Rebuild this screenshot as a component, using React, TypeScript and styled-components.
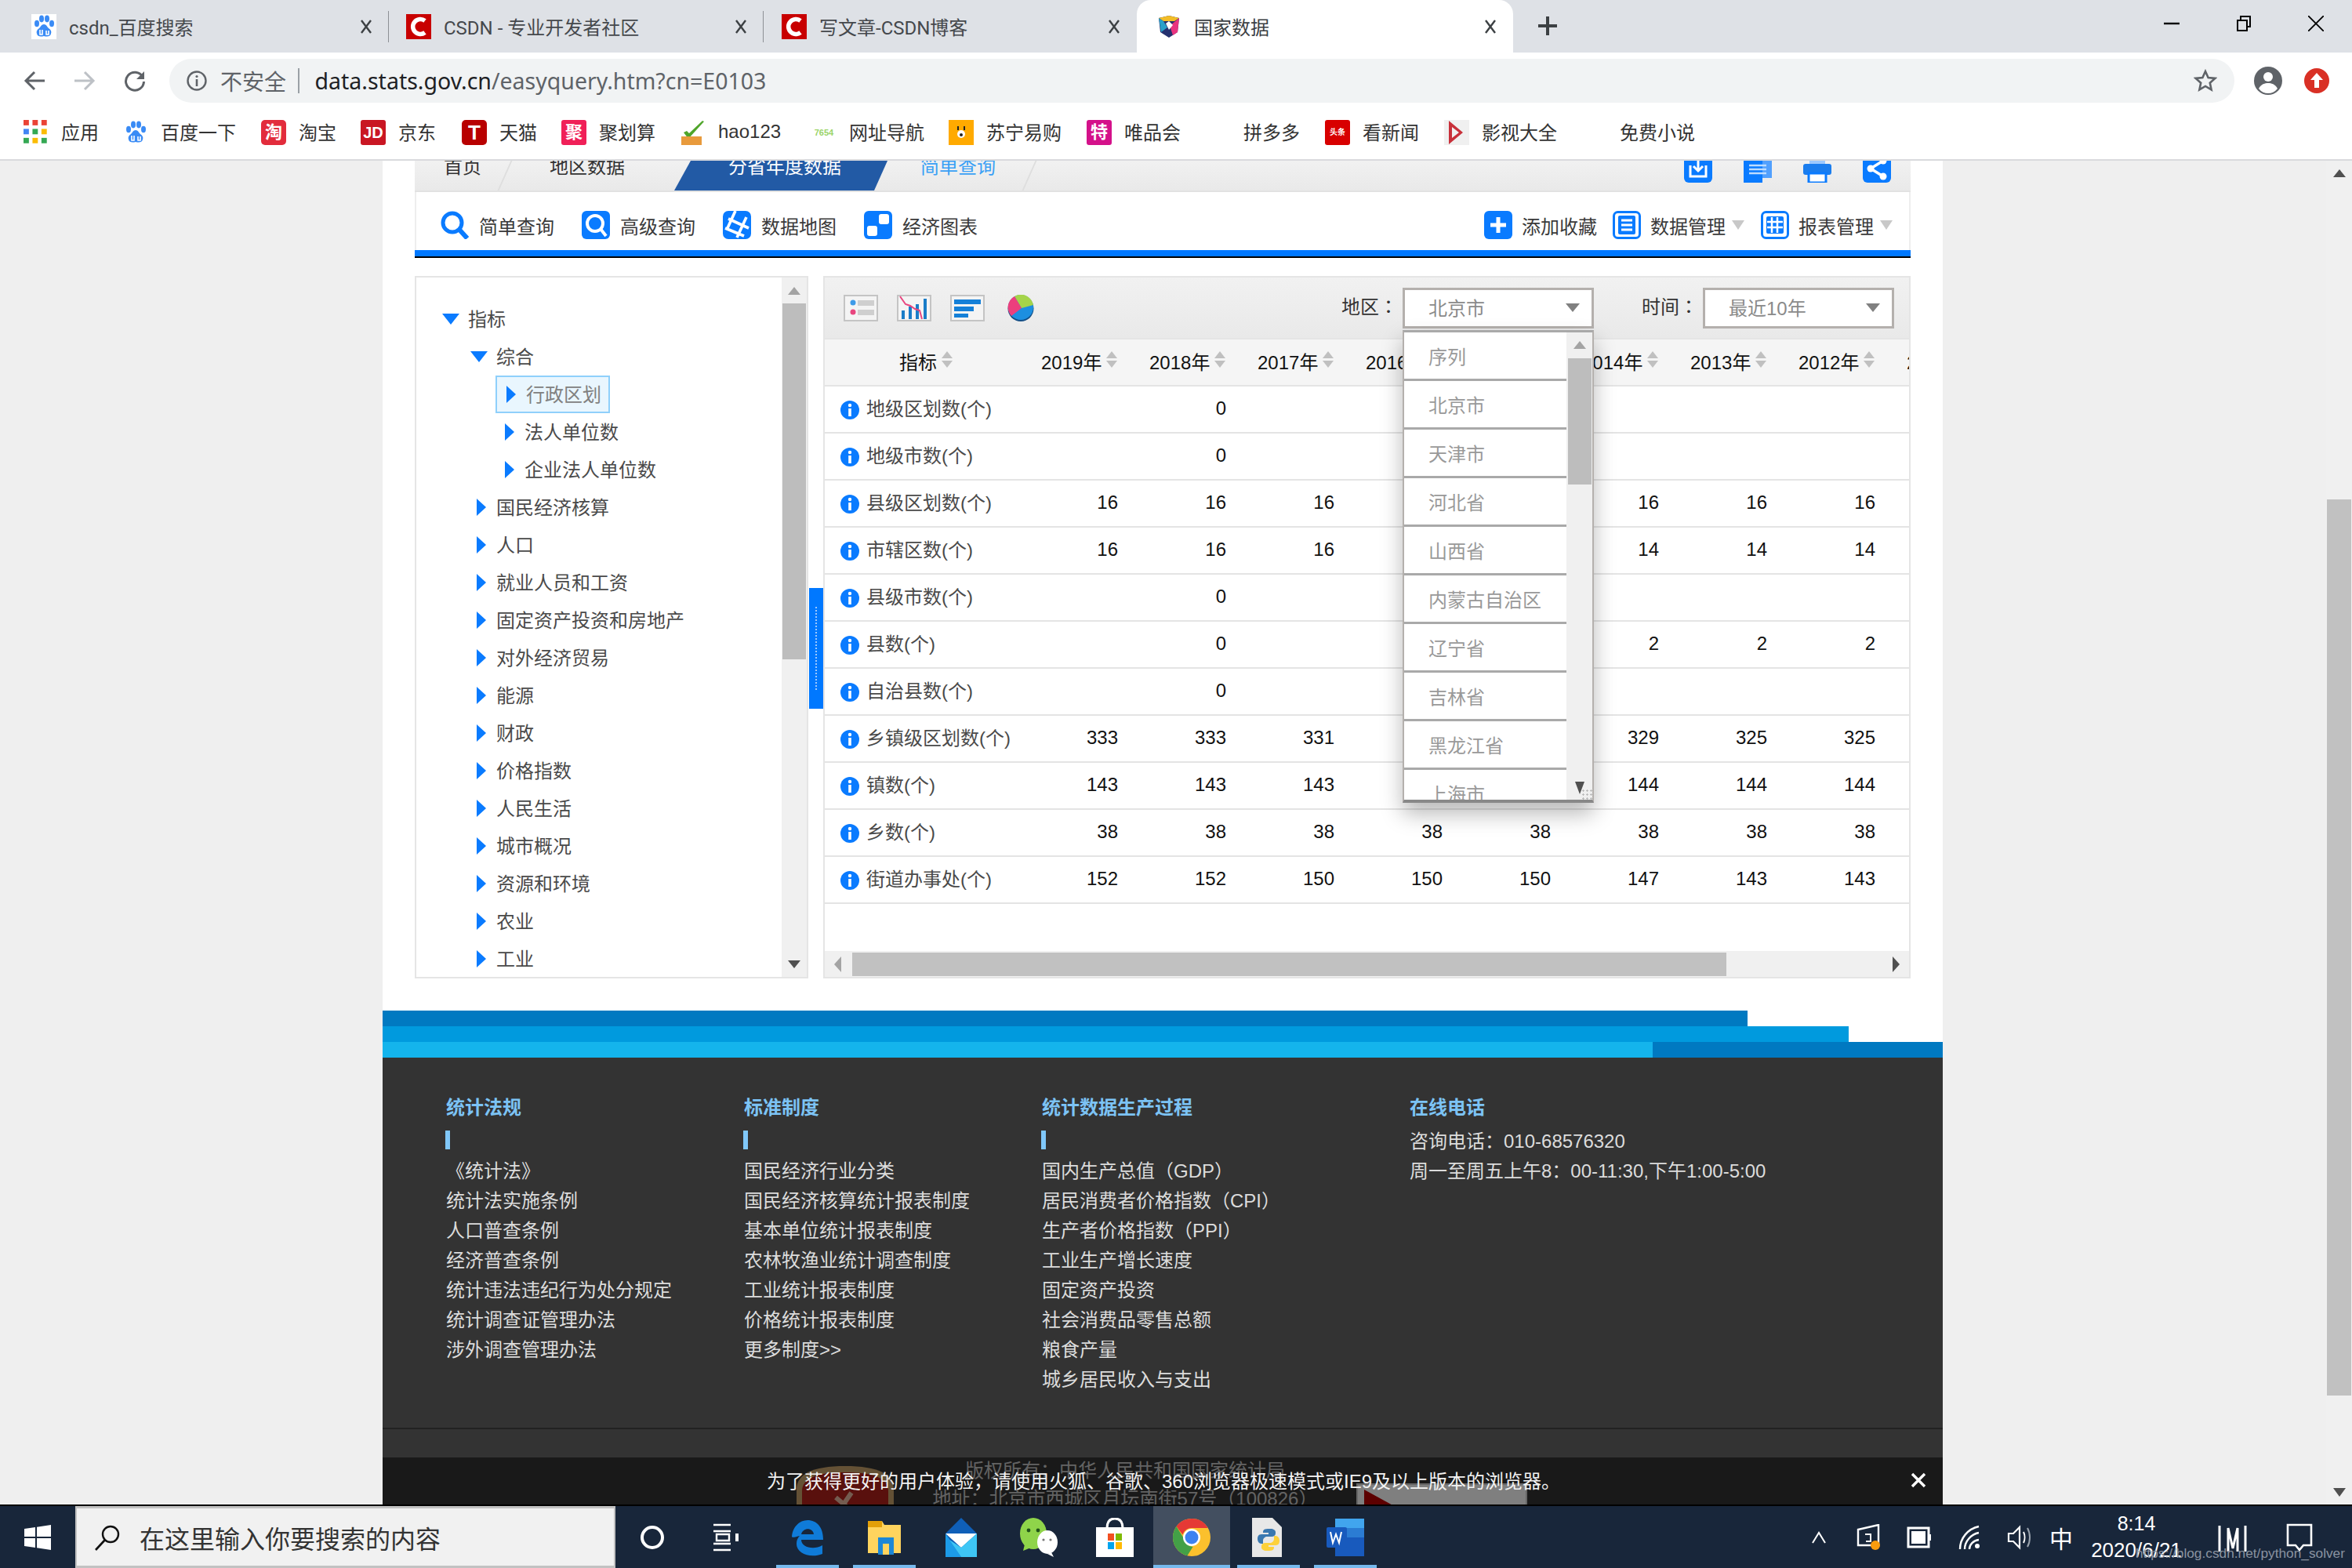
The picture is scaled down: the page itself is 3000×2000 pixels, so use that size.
import React from "react";
import styled, { createGlobalStyle } from "styled-components";

const CJK = '"Liberation Sans","Noto Sans CJK SC",sans-serif';
const UI = '"Roboto","Noto Sans CJK SC",sans-serif';
const URLFONT = '"Noto Sans","Noto Sans CJK SC",sans-serif';

const Global = createGlobalStyle`
  html, body { margin: 0; padding: 0; background: #fff; }
  * { box-sizing: border-box; }
  body { font-family: ${CJK}; }
`;

const Windowed = styled.div`
  width: 3000px; height: 2000px; display: flex; flex-direction: column; overflow: hidden; position: relative;
`;

/* ------- triangle ------- */
const Tri = styled.span<{ $d: "u" | "d" | "l" | "r"; $w: number; $h: number; $c: string }>`
  display: block; width: 0; height: 0; flex: none; border-style: solid; border-color: transparent;
  ${(p) => p.$d === "u" && `border-width: 0 ${p.$w / 2}px ${p.$h}px; border-bottom-color: ${p.$c};`}
  ${(p) => p.$d === "d" && `border-width: ${p.$h}px ${p.$w / 2}px 0; border-top-color: ${p.$c};`}
  ${(p) => p.$d === "r" && `border-width: ${p.$h / 2}px 0 ${p.$h / 2}px ${p.$w}px; border-left-color: ${p.$c};`}
  ${(p) => p.$d === "l" && `border-width: ${p.$h / 2}px ${p.$w}px ${p.$h / 2}px 0; border-right-color: ${p.$c};`}
`;

/* ------- tab strip ------- */
const TabStrip = styled.div`
  height: 67px; flex: none; background: #dee1e6; display: flex; align-items: stretch; position: relative;
`;
const Tab = styled.div<{ $w: number; $pl: number; $active?: boolean; $sep?: boolean }>`
  width: ${(p) => p.$w}px; flex: none; display: flex; align-items: center; padding: 0 22px 0 ${(p) => p.$pl}px;
  gap: 16px; position: relative; font: 24px ${UI}; color: #45484c;
  ${(p) => p.$active && `background: #fff; border-radius: 18px 18px 0 0; color:#3c4043;`}
  ${(p) => p.$sep && `&::after { content: ""; position: absolute; right: 0; top: 14px; height: 40px; width: 1.5px; background: #8d9095; }`}
`;
const TabTitle = styled.span`flex: 1; white-space: nowrap; overflow: hidden;`;
const TabIcon = styled.svg`width: 32px; height: 32px; flex: none;`;
const CloseGlyph = styled.svg`width: 14px; height: 18px; flex: none;`;
const NewTab = styled.div`
  margin-left: 32px; align-self: center; width: 24px; height: 24px; position: relative; margin-top: -2px;
  &::before { content: ""; position: absolute; left: 10px; top: 0; bottom: 0; width: 4px; background: #3c4043; }
  &::after { content: ""; position: absolute; top: 10px; left: 0; right: 0; height: 4px; background: #3c4043; }
`;
const WinControls = styled.div`
  margin-left: auto; display: flex; align-items: center; padding-right: 36px; gap: 72px; margin-top: -8px;
`;
const WinIcon = styled.svg`width: 20px; height: 20px; flex: none;`;

/* ------- chrome toolbar ------- */
const Toolbar = styled.div`
  height: 70px; flex: none; background: #fff; display: flex; align-items: center; padding: 8px 0 6px 30px;
`;
const NavBtn = styled.svg`width: 28px; height: 28px; flex: none; margin-right: 36px;`;
const Omnibox = styled.div`
  margin-left: -6px; width: 2634px; height: 56px; border-radius: 28px; background: #f1f3f4; display: flex; align-items: center;
  padding: 0 22px 0 22px; font: 28px ${URLFONT}; color: #5f6368;
`;
const InfoGlyph = styled.svg`width: 26px; height: 26px; flex: none; margin-right: 17px;`;
const Insecure = styled.span`white-space: nowrap;`;
const OmniSep = styled.span`width: 1.5px; height: 32px; background: #9aa0a6; margin: 0 20px 0 15px; flex: none;`;
const Host = styled.span`color: #202124; font-size: 28.5px;`;
const UrlPath = styled.span`color: #5f6368; font-size: 28.5px;`;
const StarIcon = styled.svg`width: 30px; height: 30px; margin-left: auto; flex: none;`;
const ProfileIcon = styled.svg`width: 36px; height: 36px; flex: none; margin-left: 25px;`;
const UpdateIcon = styled.svg`width: 32px; height: 32px; flex: none; margin-left: 28px;`;

/* ------- bookmarks ------- */
const Bookmarks = styled.div`
  height: 68px; flex: none; background: #fff; border-bottom: 2px solid #d9dadd; display: flex; align-items: center;
  padding: 0 0 2px 30px; font: 24px ${CJK}; color: #333;
`;
const Mark = styled.div<{ $w: number }>`
  width: ${(p) => p.$w}px; flex: none; display: flex; align-items: center; gap: 16px; white-space: nowrap;
`;
const MarkText = styled.span`margin-top: -3px;`;
const BmSquare = styled.span<{ $bg: string; $fg?: string; $r?: number; $fs?: number }>`
  width: 32px; height: 32px; flex: none; background: ${(p) => p.$bg}; color: ${(p) => p.$fg || "#fff"};
  border-radius: ${(p) => p.$r ?? 3}px; display: flex; align-items: center; justify-content: center;
  font: bold ${(p) => p.$fs ?? 22}px ${CJK}; overflow: hidden; line-height: 1;
`;
const BmSvg = styled.svg`width: 32px; height: 32px; flex: none;`;

/* ------- viewport ------- */
const Viewport = styled.div`
  height: 1714px; flex: none; display: flex; background: #efefef; overflow: hidden;
`;
const PageColumn = styled.div`
  margin-left: 488px; width: 1990px; flex: none; background: #fff; display: flex; flex-direction: column; position: relative; overflow: hidden;
`;
const PageBar = styled.div`
  margin-left: auto; width: 33px; flex: none; background: #f0f0f0; display: flex; flex-direction: column; align-items: center;
`;
const PageBarBtn = styled.div<{ $h: number }>`height: ${(p) => p.$h}px; flex: none; display: flex; align-items: center; justify-content: center;`;
const PageTrack = styled.div`height: 400px; flex: none;`;
const PageThumb = styled.div`width: 31px; height: 1143px; background: #c1c1c1; flex: none;`;

/* ------- site nav ------- */
const NavStrip = styled.div`
  margin-left: 41px; width: 1908px; height: 40px; flex: none; display: flex; overflow: hidden;
  background: linear-gradient(#f1f1f1, #e9e9e9); border-bottom: 2px solid #e2e2e2; position: relative;
`;
const NavItem = styled.div<{ $w: number; $pl: number; $active?: boolean; $link?: boolean; $sep?: boolean }>`
  width: ${(p) => p.$w}px; flex: none; padding-left: ${(p) => p.$pl}px; font-size: 24px; line-height: 16px; white-space: nowrap;
  color: ${(p) => (p.$active ? "#fff" : p.$link ? "#3aa0f5" : "#333")}; position: relative;
  ${(p) => p.$active && `background: #225aa5; clip-path: polygon(0 100%, 21px 0, 100% 0, calc(100% - 17px) 100%);`}
  ${(p) => p.$sep && `&::after { content: ""; position: absolute; right: 8px; top: 0; bottom: 0; width: 2px; background: #dedede; transform: skewX(-24deg); }`}
`;
const NavTools = styled.div`margin-left: auto; display: flex; gap: 40px; padding-right: 25px;`;
const NavTool = styled.svg`width: 36px; height: 36px; flex: none; margin-top: -8px;`;

const QueryBar = styled.div`
  margin-left: 41px; width: 1908px; height: 74px; flex: none; display: flex; padding: 24px 21px 0 31px;
  border-left: 2px solid #eee; border-right: 2px solid #eee; font-size: 24px; color: #3a3a3a;
`;
const QueryItem = styled.div<{ $ml?: number }>`
  display: flex; gap: 13px; align-items: center; height: 36px; margin-left: ${(p) => p.$ml ?? 35}px; white-space: nowrap;
`;
const QueryRightItem = styled(QueryItem)`gap: 12px;`;
const QueryIcon = styled.svg`width: 36px; height: 36px; flex: none;`;
const QuerySpacer = styled.div`flex: 1;`;
const CaretPad = styled.span`margin: 12px 0 0 8px; display: block; flex: none; height: 12px;`;
const BlueRule = styled.div`
  margin-left: 41px; width: 1908px; height: 10px; flex: none; background: #0078ff; border-bottom: 2px solid #000;
`;

/* ------- main area ------- */
const Main = styled.div`
  margin: 23px 0 0 41px; width: 1908px; height: 896px; flex: none; display: flex; position: relative;
`;
const TreePanel = styled.div`
  width: 502px; flex: none; border: 2px solid #e5e5e5; display: flex; overflow: hidden;
`;
const Tree = styled.div`flex: 1; padding-top: 29px; font-size: 24px; color: #4a4a4a; overflow: hidden;`;
const TreeRow = styled.div<{ $lv: number }>`
  height: 48px; display: flex; align-items: center; padding-left: ${(p) => 33 + p.$lv * 36}px; white-space: nowrap;
`;
const TreeLabel = styled.span`margin-top: -3px;`;
const CaretBox = styled.span<{ $open?: boolean }>`
  width: 33px; flex: none; padding-left: ${(p) => (p.$open ? 0 : 8)}px; display: block;
`;
const Selected = styled.div`
  margin-left: -4px; width: 146px; height: 48px; display: flex; align-items: center; gap: 13px; padding-left: 12px;
  border: 2px solid #8fd0fb; background: #e9f6fe; color: #808080;
`;
const VBar = styled.div`
  width: 32px; flex: none; background: #f0f0f0; display: flex; flex-direction: column; align-items: center;
`;
const VBarBtn = styled.div<{ $h: number }>`height: ${(p) => p.$h}px; flex: none; display: flex; align-items: center; justify-content: center;`;
const VThumb = styled.div`width: 30px; height: 454px; flex: none; background: #bdbdbd;`;
const VSpace = styled.div`flex: 1;`;

const Splitter = styled.div`
  width: 19px; flex: none; display: flex; align-items: flex-start; padding: 398px 0 0 1px;
`;
const SplitHandle = styled.div`
  width: 18px; height: 154px; background: #0078ff; display: flex; justify-content: center; padding: 24px 0;
  &::after { content: ""; width: 0; border-left: 2px dotted #9cc9ff; height: 100%; }
`;

const DataPanel = styled.div`
  width: 1387px; flex: none; border: 2px solid #e5e5e5; display: flex; flex-direction: column; position: relative; overflow: hidden;
`;
const DataTools = styled.div`
  height: 79px; flex: none; background: linear-gradient(#f1f1f1, #e9e9e9); border-bottom: 2px solid #e5e5e5; display: flex; align-items: center;
  padding: 0 19px 0 24px; font-size: 24px; color: #333;
`;
const ToolIcon = styled.svg`width: 44px; height: 34px; flex: none; margin-right: 24px;`;
const PieIcon = styled.svg`width: 34px; height: 34px; flex: none; margin-left: 5px;`;
const FilterLabel = styled.span<{ $auto?: boolean }>`
  margin-left: ${(p) => (p.$auto ? "auto" : "61px")}; width: 78px; white-space: nowrap; margin-top: -6px;
  font-family: "Noto Sans CJK TC", sans-serif;
`;
const SelectBox = styled.div`
  width: 244px; height: 52px; border: 3px solid #b4b0ad; background: #fff; display: flex; align-items: center; justify-content: space-between;
  padding: 0 15px 0 30px; color: #8a8a8a; font-size: 24px; position: relative; flex: none;
`;
const SelectValue = styled.span`margin-top: -3px;`;
const Dropdown = styled.div`
  position: absolute; left: -3px; top: 51px; width: 244px; height: 603px; background: #fff; z-index: 5;
  border: 2px solid #b4b0ad; border-top: 3px solid #a9a9a9; border-bottom: 4px solid #888;
  display: flex; box-shadow: 0 14px 26px rgba(0,0,0,.28); overflow: hidden;
`;
const DropList = styled.div`width: 207px; flex: none; overflow: hidden;`;
const DropItem = styled.div`
  height: 62px; flex: none; border-bottom: 3px solid #a9a9a9; display: flex; align-items: center; padding-left: 31px; color: #999;
  white-space: nowrap; font-size: 24px;
`;
const DropBar = styled.div`
  flex: 1; background: #f0f0f0; display: flex; flex-direction: column; align-items: center; position: relative;
`;
const DropThumb = styled.div`width: 30px; height: 161px; background: #bdbdbd; flex: none;`;
const Grip = styled.div`
  position: absolute; right: 0; bottom: 0; width: 14px; height: 14px;
  background-image: radial-gradient(#bbb 35%, transparent 40%); background-size: 5px 5px;
`;

const TableArea = styled.div`flex: 1; overflow: hidden; font-size: 24px; color: #111;`;
const GridRow = styled.div<{ $head?: boolean }>`
  display: grid; grid-template-columns: 236px repeat(9, 138px); height: 60px; border-bottom: 2px solid #e4e4e4; align-items: center;
  background: ${(p) => (p.$head ? "#f5f5f5" : "#fff")}; width: 1600px;
`;
const HeadCell = styled.div<{ $first?: boolean }>`
  display: flex; align-items: center; gap: 6px; white-space: nowrap; color: #111; margin-top: -3px;
  ${(p) => (p.$first ? "padding-left: 95px;" : "justify-content: flex-start; padding-left: 40px;")}
`;
const SortMark = styled.span`display: flex; flex-direction: column; gap: 3px; flex: none; margin-top: -4px;`;
const NameCell = styled.div`display: flex; align-items: center; gap: 9px; padding-left: 20px; color: #4a4a4a; white-space: nowrap;`;
const NameText = styled.span`margin-top: -5px;`;
const InfoDot = styled.svg`width: 24px; height: 24px; flex: none; margin-top: 2px;`;
const ValCell = styled.div`text-align: right; margin-top: -3px;`;
const HBar = styled.div`
  height: 33px; flex: none; background: #f0f0f0; display: flex; align-items: center; padding: 2px 8px 2px 12px;
`;
const HThumb = styled.div`width: 1115px; height: 30px; background: #c1c1c1; margin-left: 14px; flex: none;`;
const HBarEnd = styled.span`margin-left: auto; display: block; margin-right: 4px;`;

/* ------- footer ------- */
const Stripes = styled.div`margin-top: 41px; flex: none; display: flex; flex-direction: column; height: 60px;`;
const Stripe = styled.div<{ $w: number; $c: string; $tail?: string }>`
  height: 20px; width: 100%; display: flex; background: ${(p) => p.$tail || "transparent"};
  &::before { content: ""; display: block; width: ${(p) => p.$w}px; background: ${(p) => p.$c}; }
`;
const Footer = styled.div`flex: none; background: #333; height: 570px; display: flex; flex-direction: column; position: relative;`;
const FooterMain = styled.div`
  height: 472px; flex: none; display: grid; grid-template-columns: 380px 380px 469px 1fr; padding: 45px 0 0 81px;
  color: #dcdcdc; font-size: 24px;
`;
const FootCol = styled.div`display: flex; flex-direction: column;`;
const FootTitle = styled.div`height: 38px; line-height: 38px; color: #7cc3f5; white-space: nowrap; font-weight: bold;`;
const FootTick = styled.div`width: 6px; height: 24px; background: #80c8fa; margin: 10px 0 9px -1px; flex: none;`;
const FootLink = styled.div`height: 38px; line-height: 38px; white-space: nowrap;`;
const PhoneGap = styled.div`height: 5px; flex: none;`;
const FootRule = styled.div`height: 2px; flex: none; background: #222;`;
const FootBottom = styled.div`
  height: 96px; flex: none; overflow: hidden; display: flex; padding-left: 528px;
`;
const SealLogo = styled.svg`width: 124px; height: 90px; flex: none; margin-top: 47px;`;
const Copyright = styled.div`
  width: 590px; flex: none; display: flex; flex-direction: column; align-items: center; color: #c6c6c6; font-size: 24px; padding-top: 35px; white-space: nowrap;
`;
const CopyLine = styled.div`height: 49px; line-height: 36px;`;
const Badge = styled.svg`width: 218px; height: 80px; flex: none; margin-top: 69px;`;
const Notice = styled.div`
  position: absolute; left: 0; right: 0; bottom: 0; height: 60px; background: rgba(0,0,0,.5); color: #f2f2f2; font-size: 24px;
  display: flex; align-items: center; padding: 0 0 4px 490px; white-space: nowrap;
`;
const NoticeX = styled.svg`position: absolute; right: 21px; top: 19px; width: 20px; height: 20px;`;

/* ------- taskbar ------- */
const Taskbar = styled.div`
  height: 81px; flex: none; background: #18263a; border-top: 2px solid #000; display: flex; align-items: stretch; position: relative;
`;
const StartSlot = styled.div`width: 96px; flex: none; display: flex; align-items: center; justify-content: center;`;
const WinLogo = styled.svg`width: 36px; height: 34px;`;
const SearchBox = styled.div`
  width: 689px; flex: none; background: #f1f1f1; border: 3px solid #c2c2c2; border-right-width: 2px; border-left-width: 2px; display: flex; align-items: center; padding-left: 22px; gap: 24px;
  font: 32px ${CJK}; color: #333; white-space: nowrap;
`;
const SearchGlyph = styled.svg`width: 34px; height: 34px; flex: none;`;
const Slot = styled.div<{ $open?: boolean; $active?: boolean }>`
  width: 98px; flex: none; display: flex; align-items: center; justify-content: center; position: relative;
  ${(p) => p.$active && "background: #434f60;"}
  ${(p) =>
    p.$open &&
    `&::after { content: ""; position: absolute; bottom: 0; left: ${p.$active ? 0 : 9}px; right: ${p.$active ? 0 : 9}px; height: 4px; background: #76b9ed; }`}
`;
const TaskIcon = styled.svg`width: 50px; height: 50px;`;
const Tray = styled.div`margin-left: auto; display: flex; align-items: center; padding-right: 50px; color: #fff;`;
const TrayIcon = styled.svg`width: 64px; height: 34px; flex: none;`;
const ImeGlyph = styled.span`width: 42px; text-align: center; font: 30px ${CJK}; flex: none;`;
const Clock = styled.div`width: 150px; flex: none; text-align: center; font-family: "Liberation Sans", sans-serif; line-height: 1.2;`;
const ClockTime = styled.div`font-size: 25px;`;
const ClockDate = styled.div`font-size: 26px; margin-top: 4px;`;
const ScreenM = styled.svg`width: 40px; height: 36px; margin: 0 48px 0 28px; flex: none;`;
const NotifyIcon = styled.svg`width: 34px; height: 36px; flex: none;`;
const Watermark = styled.div`
  position: absolute; right: 9px; bottom: 8px; font: 17.3px "Liberation Sans", sans-serif; color: #8a93a0; white-space: nowrap;
`;

/* ------- drawn icons ------- */
const Paw = () => (
  <>
    <ellipse cx="7" cy="12" rx="3" ry="4.2" fill="#3a8bf5" />
    <ellipse cx="13" cy="6" rx="3" ry="4.4" fill="#3a8bf5" />
    <ellipse cx="20" cy="6" rx="3" ry="4.4" fill="#3a8bf5" />
    <ellipse cx="26" cy="12" rx="3" ry="4.2" fill="#3a8bf5" />
    <path d="M16 13c-3 0-4 3-6 5-3 2-4 4-3 7 1 4 5 4 9 3 4 1 8 1 9-3 1-3 0-5-3-7-2-2-3-5-6-5z" fill="#3a8bf5" />
    <path d="M11 20v6h3v-6m5 1v5h3v-5" fill="none" stroke="#fff" strokeWidth="1.6" />
  </>
);
const BaiduTab = () => (
  <TabIcon viewBox="0 0 32 32">
    <rect width="32" height="32" fill="#fff" />
    <Paw />
  </TabIcon>
);
const CsdnIcon = () => (
  <TabIcon viewBox="0 0 32 32">
    <rect width="32" height="32" fill="#c80000" />
    <path d="M24 8.500a9.500 9.500 0 1 0 0 15" fill="none" stroke="#fff" strokeWidth="5.500" />
  </TabIcon>
);
const StatsIcon = () => (
  <TabIcon viewBox="0 0 32 32">
    <path d="M3 5l13-3 13 3-2 18-11 7-11-7z" fill="#24306e" />
    <path d="M3 5l13-3 13 3-6 4H9z" fill="#f3bd26" />
    <path d="M29 5l-2 18-6 4-4-12z" fill="#e8337f" />
    <path d="M3 5l6 4 5 8-8 6z" fill="#2aa0c8" />
    <path d="M12 12l4-3 5 5-5 6z" fill="#fff" />
  </TabIcon>
);
const X = () => (
  <CloseGlyph viewBox="0 0 14 18">
    <path d="M1 1l12 16M13 1L1 17" stroke="#3c4043" strokeWidth="2.400" fill="none" />
  </CloseGlyph>
);

const appColors = ["#ea4335", "#ea4335", "#ea4335", "#4285f4", "#34a853", "#fbbc04", "#34a853", "#fbbc04", "#34a853"];

const treeRows: [string, number, "open" | "closed" | "sel"][] = [
  ["指标", 0, "open"],
  ["综合", 1, "open"],
  ["行政区划", 2, "sel"],
  ["法人单位数", 2, "closed"],
  ["企业法人单位数", 2, "closed"],
  ["国民经济核算", 1, "closed"],
  ["人口", 1, "closed"],
  ["就业人员和工资", 1, "closed"],
  ["固定资产投资和房地产", 1, "closed"],
  ["对外经济贸易", 1, "closed"],
  ["能源", 1, "closed"],
  ["财政", 1, "closed"],
  ["价格指数", 1, "closed"],
  ["人民生活", 1, "closed"],
  ["城市概况", 1, "closed"],
  ["资源和环境", 1, "closed"],
  ["农业", 1, "closed"],
  ["工业", 1, "closed"],
];

const years = ["2019年", "2018年", "2017年", "2016年", "2015年", "2014年", "2013年", "2012年", "2011年"];
const rows: [string, string[]][] = [
  ["地级区划数(个)", ["", "0", "", "", "", "", "", ""]],
  ["地级市数(个)", ["", "0", "", "", "", "", "", ""]],
  ["县级区划数(个)", ["16", "16", "16", "", "", "16", "16", "16"]],
  ["市辖区数(个)", ["16", "16", "16", "", "", "14", "14", "14"]],
  ["县级市数(个)", ["", "0", "", "", "", "", "", ""]],
  ["县数(个)", ["", "0", "", "", "", "2", "2", "2"]],
  ["自治县数(个)", ["", "0", "", "", "", "", "", ""]],
  ["乡镇级区划数(个)", ["333", "333", "331", "", "", "329", "325", "325"]],
  ["镇数(个)", ["143", "143", "143", "", "", "144", "144", "144"]],
  ["乡数(个)", ["38", "38", "38", "38", "38", "38", "38", "38"]],
  ["街道办事处(个)", ["152", "152", "150", "150", "150", "147", "143", "143"]],
];
const provinces = ["序列", "北京市", "天津市", "河北省", "山西省", "内蒙古自治区", "辽宁省", "吉林省", "黑龙江省", "上海市"];

const col1 = ["《统计法》", "统计法实施条例", "人口普查条例", "经济普查条例", "统计违法违纪行为处分规定", "统计调查证管理办法", "涉外调查管理办法"];
const col2 = ["国民经济行业分类", "国民经济核算统计报表制度", "基本单位统计报表制度", "农林牧渔业统计调查制度", "工业统计报表制度", "价格统计报表制度", "更多制度>>"];
const col3 = ["国内生产总值（GDP）", "居民消费者价格指数（CPI）", "生产者价格指数（PPI）", "工业生产增长速度", "固定资产投资", "社会消费品零售总额", "粮食产量", "城乡居民收入与支出"];

const Sort = () => (
  <SortMark>
    <Tri $d="u" $w={15} $h={9} $c="#c0c0c0" />
    <Tri $d="d" $w={15} $h={9} $c="#c0c0c0" />
  </SortMark>
);
const Blue = "#0a7bff";

export default function App() {
  return (
    <Windowed>
      <Global />
      <TabStrip>
        <Tab $w={496} $pl={40} $sep><BaiduTab /><TabTitle>csdn_百度搜索</TabTitle><X /></Tab>
        <Tab $w={478} $pl={22} $sep><CsdnIcon /><TabTitle>CSDN - 专业开发者社区</TabTitle><X /></Tab>
        <Tab $w={476} $pl={23}><CsdnIcon /><TabTitle>写文章-CSDN博客</TabTitle><X /></Tab>
        <Tab $w={480} $pl={25} $active><StatsIcon /><TabTitle>国家数据</TabTitle><X /></Tab>
        <NewTab />
        <WinControls>
          <WinIcon viewBox="0 0 20 20"><path d="M0 10h20" stroke="#000" strokeWidth="2.400" /></WinIcon>
          <WinIcon viewBox="0 0 20 20"><path d="M2 6h12v13H2zM6 6V1h12v13h-4" stroke="#000" strokeWidth="2" fill="none" /></WinIcon>
          <WinIcon viewBox="0 0 20 20"><path d="M0 0l20 20M20 0L0 20" stroke="#000" strokeWidth="1.800" /></WinIcon>
        </WinControls>
      </TabStrip>

      <Toolbar>
        <NavBtn viewBox="0 0 28 28"><path d="M27 14H4M14 3L3 14l11 11" stroke="#5f6368" strokeWidth="3" fill="none" /></NavBtn>
        <NavBtn viewBox="0 0 28 28"><path d="M1 14h23M14 3l11 11-11 11" stroke="#bdc1c6" strokeWidth="3" fill="none" /></NavBtn>
        <NavBtn viewBox="0 0 28 28"><path d="M24 9A11.500 11.500 0 1 0 25.500 15" stroke="#5f6368" strokeWidth="3" fill="none" /><path d="M26 2v10H16z" fill="#5f6368" /></NavBtn>
        <Omnibox>
          <InfoGlyph viewBox="0 0 26 26">
            <circle cx="13" cy="13" r="11.500" stroke="#5f6368" strokeWidth="2.400" fill="none" />
            <path d="M13 11v9" stroke="#5f6368" strokeWidth="2.600" /><circle cx="13" cy="7.500" r="1.600" fill="#5f6368" />
          </InfoGlyph>
          <Insecure>不安全</Insecure>
          <OmniSep />
          <Host>data.stats.gov.cn</Host><UrlPath>/easyquery.htm?cn=E0103</UrlPath>
          <StarIcon viewBox="0 0 30 30"><path d="M15 3l3.600 8 8.700.9-6.500 5.800 1.800 8.600L15 21.900l-7.600 4.400 1.800-8.600-6.500-5.800 8.700-.9z" fill="none" stroke="#5f6368" strokeWidth="2.600" /></StarIcon>
        </Omnibox>
        <ProfileIcon viewBox="0 0 36 36">
          <circle cx="18" cy="18" r="18" fill="#5f6368" /><circle cx="18" cy="13" r="6" fill="#fff" />
          <path d="M6 28c3-6 8-7 12-7s9 1 12 7a15 15 0 0 1-24 0z" fill="#fff" />
        </ProfileIcon>
        <UpdateIcon viewBox="0 0 32 32">
          <circle cx="16" cy="16" r="16" fill="#d93025" /><path d="M16 6l8 9h-5v10h-6V15H8z" fill="#fff" />
        </UpdateIcon>
      </Toolbar>

      <Bookmarks>
        <Mark $w={127}>
          <BmSvg viewBox="0 0 28 28">
            {appColors.map((c, i) => <rect key={i} x={(i % 3) * 10} y={Math.floor(i / 3) * 10} width="6" height="6" fill={c} />)}
          </BmSvg>
          <MarkText>应用</MarkText>
        </Mark>
        <Mark $w={176}><BmSvg viewBox="0 0 32 32"><Paw /></BmSvg><MarkText>百度一下</MarkText></Mark>
        <Mark $w={127}><BmSquare $bg="#e22c3c" $r={5}>淘</BmSquare><MarkText>淘宝</MarkText></Mark>
        <Mark $w={129}><BmSquare $bg="#c91623" $fs={20}>JD</BmSquare><MarkText>京东</MarkText></Mark>
        <Mark $w={127}><BmSquare $bg="#b80000" $r={5} $fs={26}>T</BmSquare><MarkText>天猫</MarkText></Mark>
        <Mark $w={152}><BmSquare $bg="#f02058">聚</BmSquare><MarkText>聚划算</MarkText></Mark>
        <Mark $w={167}>
          <BmSvg viewBox="0 0 32 32">
            <path d="M4 16l6 8L30 2l-2-1L11 17l-3-3z" fill="#4fa52a" />
            <rect x="1" y="21" width="26" height="11" fill="#e89a3c" />
          </BmSvg>
          <MarkText>hao123</MarkText>
        </Mark>
        <Mark $w={175}>
          <BmSquare $bg="transparent" $fg="#9ad46a" $fs={11}>7654</BmSquare><MarkText>网址导航</MarkText>
        </Mark>
        <Mark $w={176}>
          <BmSvg viewBox="0 0 32 32">
            <rect width="32" height="32" fill="#ffaa00" />
            <path d="M12 8v5M20 8v5" stroke="#222" strokeWidth="2" /><circle cx="16" cy="18" r="5" fill="#fff" /><circle cx="16" cy="19" r="2" fill="#222" />
          </BmSvg>
          <MarkText>苏宁易购</MarkText>
        </Mark>
        <Mark $w={200}><BmSquare $bg="#d4118a">特</BmSquare><MarkText>唯品会</MarkText></Mark>
        <Mark $w={104}><MarkText>拼多多</MarkText></Mark>
        <Mark $w={152}><BmSquare $bg="#d80000" $fs={10}>头条</BmSquare><MarkText>看新闻</MarkText></Mark>
        <Mark $w={224}>
          <BmSvg viewBox="0 0 32 32">
            <rect width="32" height="32" fill="#f0f0f0" />
            <path d="M6 1l18 15L6 31zM10 9l9 7-9 7z" fill="#c8303a" fillRule="evenodd" />
          </BmSvg>
          <MarkText>影视大全</MarkText>
        </Mark>
        <Mark $w={110}><MarkText>免费小说</MarkText></Mark>
      </Bookmarks>

      <Viewport>
        <PageColumn>
          <NavStrip>
            <NavItem $w={124} $pl={37} $sep>首页</NavItem>
            <NavItem $w={207} $pl={48}>地区数据</NavItem>
            <NavItem $w={272} $pl={69} $active>分省年度数据</NavItem>
            <NavItem $w={190} $pl={42} $link $sep>简单查询</NavItem>
            <NavTools>
              <NavTool viewBox="0 0 36 36"><rect width="36" height="36" rx="6" fill={Blue} /><path d="M18 6v14M12 15l6 6 6-6M8 14v14h20V14" stroke="#fff" strokeWidth="3" fill="none" /></NavTool>
              <NavTool viewBox="0 0 36 36"><path d="M0 4h24v32H0z" fill={Blue} /><path d="M24 4h12v26H24z" fill="#3f97ff" opacity=".9" /><path d="M7 14h22M7 19h22M7 24h22" stroke="#bcdcff" strokeWidth="2.500" /></NavTool>
              <NavTool viewBox="0 0 36 36"><path d="M8 0h20v12H8z" fill="#9cc9ff" /><rect y="12" width="36" height="14" rx="3" fill="#1a7dee" /><rect x="7" y="24" width="22" height="12" fill="#fff" stroke={Blue} strokeWidth="3" /></NavTool>
              <NavTool viewBox="0 0 36 36"><rect width="36" height="36" rx="6" fill={Blue} /><path d="M26 8L10 18l16 10" stroke="#fff" strokeWidth="3.500" fill="none" /><circle cx="26" cy="8" r="4.500" fill="#fff" /><circle cx="10" cy="18" r="4.500" fill="#fff" /><circle cx="26" cy="28" r="4.500" fill="#fff" /></NavTool>
            </NavTools>
          </NavStrip>

          <QueryBar>
            <QueryItem $ml={0}>
              <QueryIcon viewBox="0 0 36 36"><circle cx="15" cy="15" r="12" fill="none" stroke={Blue} strokeWidth="5" /><path d="M24 24l10 11" stroke={Blue} strokeWidth="6" /></QueryIcon>
              <span>简单查询</span>
            </QueryItem>
            <QueryItem>
              <QueryIcon viewBox="0 0 36 36"><rect width="36" height="36" rx="6" fill={Blue} /><circle cx="17" cy="16" r="10" fill="none" stroke="#fff" strokeWidth="4" /><path d="M24 23l7 9" stroke="#fff" strokeWidth="4" /></QueryIcon>
              <span>高级查询</span>
            </QueryItem>
            <QueryItem>
              <QueryIcon viewBox="0 0 36 36">
                <rect width="36" height="36" rx="7" fill={Blue} />
                <path d="M16 0L5 24M30 8L18 34M7 10l26 12M3 22l24 10" stroke="#fff" strokeWidth="3.600" />
              </QueryIcon>
              <span>数据地图</span>
            </QueryItem>
            <QueryItem>
              <QueryIcon viewBox="0 0 36 36"><rect width="36" height="36" rx="6" fill={Blue} /><rect x="19" y="4" width="13" height="13" rx="3" fill="#fff" /><rect x="4" y="19" width="13" height="13" rx="3" fill="#fff" /></QueryIcon>
              <span>经济图表</span>
            </QueryItem>
            <QuerySpacer />
            <QueryRightItem $ml={0}>
              <QueryIcon viewBox="0 0 36 36"><rect width="36" height="36" rx="6" fill={Blue} /><path d="M18 8v20M8 18h20" stroke="#fff" strokeWidth="5" /></QueryIcon>
              <span>添加收藏</span>
            </QueryRightItem>
            <QueryRightItem $ml={20}>
              <QueryIcon viewBox="0 0 36 36"><rect x="1.500" y="1.500" width="33" height="33" rx="5" fill="#fff" stroke={Blue} strokeWidth="3" /><rect x="7" y="6" width="22" height="24" rx="2" fill={Blue} /><path d="M11 12h14M11 18h14M11 24h14" stroke="#fff" strokeWidth="3" /></QueryIcon>
              <span>数据管理</span>
            </QueryRightItem>
            <CaretPad><Tri $d="d" $w={17} $h={12} $c="#c8c8c8" /></CaretPad>
            <QueryRightItem $ml={21}>
              <QueryIcon viewBox="0 0 36 36"><rect x="1.500" y="1.500" width="33" height="33" rx="5" fill="#fff" stroke={Blue} strokeWidth="3" /><rect x="7" y="7" width="22" height="22" rx="2" fill={Blue} /><path d="M14 8v20M21 8v20M8 14h20M8 21h20" stroke="#fff" strokeWidth="2.500" /></QueryIcon>
              <span>报表管理</span>
            </QueryRightItem>
            <CaretPad><Tri $d="d" $w={17} $h={12} $c="#c8c8c8" /></CaretPad>
          </QueryBar>
          <BlueRule />

          <Main>
            <TreePanel>
              <Tree>
                {treeRows.map(([t, lv, st]) => (
                  <TreeRow key={t} $lv={lv}>
                    {st === "sel" ? (
                      <Selected><Tri $d="r" $w={12} $h={22} $c={Blue} /><TreeLabel>{t}</TreeLabel></Selected>
                    ) : (
                      <>
                        <CaretBox $open={st === "open"}>
                          {st === "open" ? <Tri $d="d" $w={22} $h={14} $c={Blue} /> : <Tri $d="r" $w={12} $h={22} $c={Blue} />}
                        </CaretBox>
                        <TreeLabel>{t}</TreeLabel>
                      </>
                    )}
                  </TreeRow>
                ))}
              </Tree>
              <VBar>
                <VBarBtn $h={33}><Tri $d="u" $w={16} $h={10} $c="#a3a3a3" /></VBarBtn>
                <VThumb />
                <VSpace />
                <VBarBtn $h={33}><Tri $d="d" $w={16} $h={10} $c="#505050" /></VBarBtn>
              </VBar>
            </TreePanel>
            <Splitter><SplitHandle /></Splitter>
            <DataPanel>
              <DataTools>
                <ToolIcon viewBox="0 0 44 34">
                  <rect x="1" y="1" width="42" height="32" fill="#f4f4f4" stroke="#c4c4c4" strokeWidth="2" />
                  <circle cx="12" cy="10" r="3.500" fill="#3f9be8" /><rect x="18" y="7" width="21" height="7" fill="#cfcfcf" />
                  <circle cx="12" cy="22" r="3.500" fill="#e8467f" /><rect x="18" y="19" width="21" height="7" fill="#cfcfcf" />
                </ToolIcon>
                <ToolIcon viewBox="0 0 44 34">
                  <rect x="1" y="1" width="42" height="32" fill="#f4f4f4" stroke="#c4c4c4" strokeWidth="2" />
                  <rect x="6" y="20" width="4" height="11" fill="#1a7dc8" /><rect x="15" y="15" width="4" height="16" fill="#1a7dc8" /><rect x="24" y="12" width="4" height="19" fill="#1a7dc8" /><rect x="34" y="5" width="4" height="26" fill="#1a7dc8" />
                  <path d="M4 2l7 10 6 2 6 4 6 2 3 11" stroke="#e8467f" strokeWidth="2" fill="none" />
                </ToolIcon>
                <ToolIcon viewBox="0 0 44 34">
                  <rect x="1" y="1" width="42" height="32" fill="#f4f4f4" stroke="#c4c4c4" strokeWidth="2" />
                  <rect x="5" y="6" width="34" height="6" fill="#1480d8" /><rect x="5" y="15" width="25" height="6" fill="#1480d8" /><rect x="5" y="24" width="18" height="5" fill="#1480d8" />
                </ToolIcon>
                <PieIcon viewBox="0 0 34 34">
                  <circle cx="17" cy="17.500" r="16.500" fill="#134e86" />
                  <circle cx="17" cy="16" r="16" fill="#1d8fe0" />
                  <path d="M18 17L9 2A16 16 0 0 1 33 13z" fill="#a5d44a" />
                  <path d="M18 17L9 2A16 16 0 0 0 5 27z" fill="#ec3f7d" />
                </PieIcon>
                <FilterLabel $auto>地区：</FilterLabel>
                <SelectBox>
                  <SelectValue>北京市</SelectValue><Tri $d="d" $w={18} $h={11} $c="#808080" />
                  <Dropdown>
                    <DropList>
                      {provinces.map((p) => <DropItem key={p}>{p}</DropItem>)}
                    </DropList>
                    <DropBar>
                      <VBarBtn $h={33}><Tri $d="u" $w={16} $h={10} $c="#a3a3a3" /></VBarBtn>
                      <DropThumb />
                      <VSpace />
                      <VBarBtn $h={30}><Tri $d="d" $w={12} $h={16} $c="#505050" /></VBarBtn>
                      <Grip />
                    </DropBar>
                  </Dropdown>
                </SelectBox>
                <FilterLabel>时间：</FilterLabel>
                <SelectBox>
                  <SelectValue>最近10年</SelectValue><Tri $d="d" $w={18} $h={11} $c="#808080" />
                </SelectBox>
              </DataTools>
              <TableArea>
                <GridRow $head>
                  <HeadCell $first><span>指标</span><Sort /></HeadCell>
                  {years.map((y) => <HeadCell key={y}><span>{y}</span><Sort /></HeadCell>)}
                </GridRow>
                {rows.map(([name, vals]) => (
                  <GridRow key={name}>
                    <NameCell>
                      <InfoDot viewBox="0 0 24 24">
                        <circle cx="12" cy="12" r="12" fill={Blue} />
                        <rect x="10.200" y="10" width="3.600" height="10" fill="#fff" /><circle cx="12" cy="6" r="2.200" fill="#fff" />
                      </InfoDot>
                      <NameText>{name}</NameText>
                    </NameCell>
                    {vals.map((v, i) => <ValCell key={i}>{v}</ValCell>)}
                  </GridRow>
                ))}
              </TableArea>
              <HBar>
                <Tri $d="l" $w={9} $h={20} $c="#a3a3a3" />
                <HThumb />
                <HBarEnd><Tri $d="r" $w={9} $h={20} $c="#505050" /></HBarEnd>
              </HBar>
            </DataPanel>
          </Main>

          <Stripes>
            <Stripe $w={1741} $c="#0079c1" />
            <Stripe $w={1870} $c="#009ade" />
            <Stripe $w={1620} $c="#14b4ec" $tail="#0079c1" />
          </Stripes>
          <Footer>
            <FooterMain>
              <FootCol>
                <FootTitle>统计法规</FootTitle><FootTick />
                {col1.map((t) => <FootLink key={t}>{t}</FootLink>)}
              </FootCol>
              <FootCol>
                <FootTitle>标准制度</FootTitle><FootTick />
                {col2.map((t) => <FootLink key={t}>{t}</FootLink>)}
              </FootCol>
              <FootCol>
                <FootTitle>统计数据生产过程</FootTitle><FootTick />
                {col3.map((t) => <FootLink key={t}>{t}</FootLink>)}
              </FootCol>
              <FootCol>
                <FootTitle>在线电话</FootTitle><PhoneGap />
                <FootLink>咨询电话：010-68576320</FootLink>
                <FootLink>周一至周五上午8：00-11:30,下午1:00-5:00</FootLink>
              </FootCol>
            </FooterMain>
            <FootRule />
            <FootBottom>
              <SealLogo viewBox="0 0 124 90">
                <path d="M0 30C0 10 20 0 62 0s62 10 62 30v60H0z" fill="#c9a26a" />
                <path d="M7 32C7 16 25 8 62 8s55 8 55 24v58H7z" fill="#b2201a" />
                <path d="M50 40l24 20M70 34L48 66" stroke="#e8b9a0" strokeWidth="6" />
              </SealLogo>
              <Copyright>
                <CopyLine>版权所有：中华人民共和国国家统计局</CopyLine>
                <CopyLine>地址：北京市西城区月坛南街57号（100826）</CopyLine>
              </Copyright>
              <Badge viewBox="0 0 218 80">
                <rect x="1" y="1" width="216" height="78" fill="#fff" stroke="#ccc" strokeWidth="2" />
                <path d="M10 8l62 34-62 30z" fill="#b80000" />
              </Badge>
            </FootBottom>
            <Notice>
              为了获得更好的用户体验，请使用火狐、谷歌、360浏览器极速模式或IE9及以上版本的浏览器。
              <NoticeX viewBox="0 0 20 20"><path d="M2 2l16 16M18 2L2 18" stroke="#fff" strokeWidth="3.400" /></NoticeX>
            </Notice>
          </Footer>
        </PageColumn>
        <PageBar>
          <PageBarBtn $h={32}><Tri $d="u" $w={16} $h={10} $c="#505050" /></PageBarBtn>
          <PageTrack />
          <PageThumb />
          <VSpace />
          <PageBarBtn $h={32}><Tri $d="d" $w={16} $h={11} $c="#505050" /></PageBarBtn>
        </PageBar>
      </Viewport>

      <Taskbar>
        <StartSlot>
          <WinLogo viewBox="0 0 36 34">
            <path d="M1 6l14-2v12H1zM17 3.700L35 1v15H17zM1 18h14v12L1 28zM17 18h18v15l-18-2.700z" fill="#fff" />
          </WinLogo>
        </StartSlot>
        <SearchBox>
          <SearchGlyph viewBox="0 0 34 34"><circle cx="21" cy="13" r="10" fill="none" stroke="#111" strokeWidth="2.400" /><path d="M14 20L2 33" stroke="#111" strokeWidth="2.600" /></SearchGlyph>
          <span>在这里输入你要搜索的内容</span>
        </SearchBox>
        <Slot>
          <TaskIcon viewBox="0 0 50 50"><circle cx="23" cy="25" r="13" fill="none" stroke="#fff" strokeWidth="4" /></TaskIcon>
        </Slot>
        <Slot>
          <TaskIcon viewBox="0 0 50 50"><path d="M3 9h22M3 17h22M3 33h22M3 41h22M7 21h16v8H7z" stroke="#fff" strokeWidth="2.400" fill="none" /><rect x="31" y="20" width="4" height="10" fill="#fff" /></TaskIcon>
        </Slot>
        <Slot $open>
          <TaskIcon viewBox="0 0 50 50">
            <path d="M5 24C6 10 16 3 25 3c12 0 20 9 20 25H17c0 9 15 14 27 7v11c-15 6-33 0-33-13 0-5 2-8 4-10-5 1-9 3-10 1zM17 21h16c-1-9-14-9-16 0z" fill="#0f7bd8" fillRule="evenodd" />
          </TaskIcon>
        </Slot>
        <Slot $open>
          <TaskIcon viewBox="0 0 50 50">
            <path d="M4 4h18l3 5h21v36H4z" fill="#ffd45e" /><path d="M4 4h18v8H4z" fill="#e3a008" />
            <rect x="17" y="25" width="20" height="22" fill="#1c87d6" /><rect x="23" y="33" width="8" height="14" fill="#ffd45e" />
          </TaskIcon>
        </Slot>
        <Slot>
          <TaskIcon viewBox="0 0 50 50">
            <path d="M25 0l20 20v30H5V20z" fill="#0f5fb8" /><path d="M5 20h40L25 38z" fill="#fff" />
            <path d="M5 20l20 30H5z" fill="#1c9be8" /><path d="M45 20v30H25L10 28l15 10z" fill="#3ec6f5" />
          </TaskIcon>
        </Slot>
        <Slot>
          <TaskIcon viewBox="0 0 50 50">
            <ellipse cx="19" cy="20" rx="17" ry="20" fill="#8fd44a" /><circle cx="13" cy="16" r="2.400" fill="#22541a" /><circle cx="25" cy="16" r="2.400" fill="#22541a" />
            <path d="M8 34l-2 8 10-4z" fill="#8fd44a" />
            <ellipse cx="37" cy="31" rx="13" ry="15" fill="#fff" /><circle cx="32" cy="28" r="1.600" fill="#777" /><circle cx="41" cy="28" r="1.600" fill="#777" />
            <path d="M42 44l3 6-8-4z" fill="#fff" />
          </TaskIcon>
        </Slot>
        <Slot>
          <TaskIcon viewBox="0 0 50 50">
            <rect x="1" y="12" width="48" height="38" fill="#fff" />
            <path d="M15 13C15 4 19 1 25 1s10 3 10 12" fill="none" stroke="#fff" strokeWidth="3" />
            <rect x="16" y="20" width="8" height="9" fill="#f25022" /><rect x="26" y="20" width="8" height="9" fill="#7fba00" />
            <rect x="16" y="31" width="8" height="9" fill="#00a4ef" /><rect x="26" y="31" width="8" height="9" fill="#ffb900" />
          </TaskIcon>
        </Slot>
        <Slot $open $active>
          <TaskIcon viewBox="0 0 50 50">
            <circle cx="25" cy="25" r="24" fill="#fbc02d" />
            <path d="M25 1a24 24 0 0 1 20.800 12H25a12 12 0 0 0-11.500 8.500L5.500 11A24 24 0 0 1 25 1z" fill="#e53935" />
            <path d="M5.500 11l10 16a12 12 0 0 0 11 10L19.500 48.300A24 24 0 0 1 5.500 11z" fill="#43a047" />
            <circle cx="25" cy="25" r="11" fill="#fff" /><circle cx="25" cy="25" r="8.500" fill="#3d82f0" />
          </TaskIcon>
        </Slot>
        <Slot $open>
          <TaskIcon viewBox="0 0 50 50">
            <path d="M4 0h26l12 12v38H4z" fill="#e8e8e8" />
            <path d="M24 14c-6 0-6 3-6 5h7v2h-9c-4 0-5 3-5 6s2 6 5 6h2v-4c0-3 3-5 5-5h6c3 0 5-2 5-4v-2c0-2-3-4-6-4z" fill="#3a78b0" />
            <path d="M26 42c6 0 6-3 6-5h-7v-2h9c4 0 5-3 5-6s-2-6-5-6h-2v4c0 3-3 5-5 5h-6c-3 0-5 2-5 4v2c0 2 3 4 6 4z" fill="#fdd13a" />
          </TaskIcon>
        </Slot>
        <Slot $open>
          <TaskIcon viewBox="0 0 50 50">
            <path d="M12 1h37v48H12z" fill="#185abd" /><path d="M12 1h37v12H12z" fill="#41a5ee" /><path d="M12 13h37v12H12z" fill="#2b7cd3" />
            <rect x="1" y="12" width="26" height="26" rx="2" fill="#185abd" />
            <path d="M6 18l3 14 4-11 4 11 3-14" stroke="#fff" strokeWidth="2" fill="none" />
          </TaskIcon>
        </Slot>
        <Tray>
          <TrayIcon viewBox="0 0 64 34"><path d="M24 24l8-13 8 13" stroke="#fff" strokeWidth="2" fill="none" /></TrayIcon>
          <TrayIcon viewBox="0 0 64 34"><path d="M18 7l26-6v26H18z" fill="none" stroke="#fff" strokeWidth="2.400" /><path d="M27 13h7v9h-6" stroke="#fff" strokeWidth="2" fill="none" /><circle cx="40" cy="27" r="6" fill="#f89c0e" /></TrayIcon>
          <TrayIcon viewBox="0 0 64 34"><rect x="18" y="5" width="26" height="24" fill="none" stroke="#fff" strokeWidth="3" /><rect x="22" y="9" width="18" height="16" fill="#fff" /><rect x="44" y="13" width="3" height="8" fill="#fff" /></TrayIcon>
          <TrayIcon viewBox="0 0 64 34"><path d="M20 32C20 18 30 6 44 3M26 32c0-10 8-19 18-21M32 32c0-6 5-11 12-12" stroke="#fff" strokeWidth="2.400" fill="none" /><circle cx="42" cy="28" r="3" fill="#fff" /></TrayIcon>
          <TrayIcon viewBox="0 0 64 34"><path d="M18 12h6l8-8v26l-8-8h-6z" fill="none" stroke="#fff" strokeWidth="2.200" /><path d="M37 10c2 4 2 10 0 14" stroke="#fff" strokeWidth="2" fill="none" /><path d="M42 5c4 7 4 17 0 24" stroke="#9aa3ad" strokeWidth="2" fill="none" /></TrayIcon>
          <ImeGlyph>中</ImeGlyph>
          <Clock><ClockTime>8:14</ClockTime><ClockDate>2020/6/21</ClockDate></Clock>
          <ScreenM viewBox="0 0 40 36"><path d="M3 36V3M14 36V6l6 26 6-26v30M36 36V3" stroke="#fff" strokeWidth="3" fill="none" /></ScreenM>
          <NotifyIcon viewBox="0 0 34 36"><path d="M2 2h30v26H22l-5 6-5-6H2z" fill="none" stroke="#fff" strokeWidth="2.600" /></NotifyIcon>
        </Tray>
        <Watermark>https://blog.csdn.net/python_solver</Watermark>
      </Taskbar>
    </Windowed>
  );
}
